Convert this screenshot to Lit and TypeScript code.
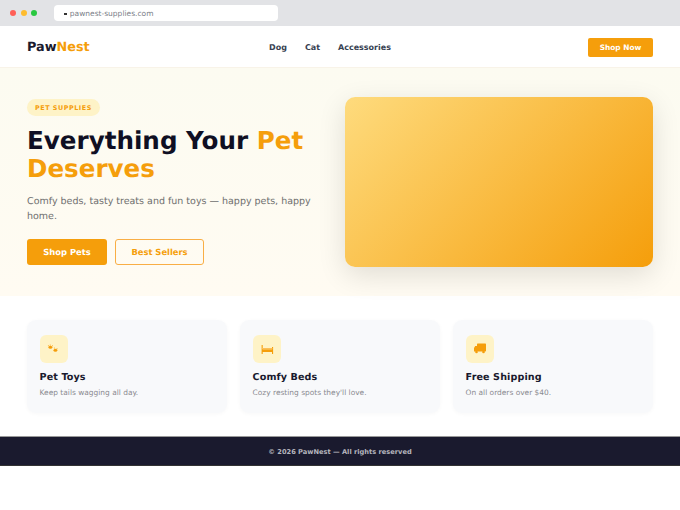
import { LitElement, html, css } from "lit";
import { customElement } from "lit/decorators.js";

@customElement("app-root")
export class AppRoot extends LitElement {
  static styles = css`
    :host { display: block; width: 680px; height: 510px; background: #fff; font-family: "DejaVu Sans", sans-serif; color: #1a1a2e; overflow: hidden; text-rendering: geometricPrecision; }
    * { box-sizing: border-box; }
    .chrome { height: 26px; background: #e2e3e6; display: flex; align-items: center; padding: 0 10px; gap: 4.6px; }
    .dot { width: 6px; height: 6px; border-radius: 50%; }
    .url { margin-left: 12px; width: 224px; height: 16px; background: #fff; border-radius: 4px; display: flex; align-items: center; padding-left: 10px; gap: 3px; font-size: 7.5px; color: #7b8088; }
    .lock { width: 3px; height: 2.5px; margin-top: 2px; background: #333; }
    nav { height: 42px; padding: 1px 27px 0; display: grid; grid-template-columns: 242px auto 1fr; align-items: center; border-bottom: 1px solid #f8f3e8; }
    .logo { font-size: 12.8px; font-weight: 700; }
    .logo span, h1 span { color: #f59e0b; }
    .links { display: flex; gap: 18px; font-size: 8px; font-weight: 600; color: #374151; }
    .cta { justify-self: end; background: #f59e0b; color: #fff; border-radius: 2px; font-size: 7.4px; font-weight: 700; width: 65px; height: 19px; display: flex; align-items: center; justify-content: center; }
    .hero { height: 228px; background: linear-gradient(180deg, #fcfbf1, #fffbf2); padding: 29px 27px 0; display: grid; grid-template-columns: 1fr 308px; column-gap: 11px; }
    .copy { padding-top: 2px; }
    .badge { display: flex; width: fit-content; height: 17px; align-items: center; padding: 0 8px; border-radius: 9px; background: #fef3c7; color: #f59e0b; font-size: 6.4px; font-weight: 700; letter-spacing: .55px; }
    h1 { margin: 11px 0 0; font-size: 24.6px; line-height: 28px; font-weight: 700; color: #0f0f23; }
    p { margin: 11px 0 0; font-size: 9.5px; line-height: 15px; color: #6f6f6f; }
    .actions { display: flex; gap: 8px; margin-top: 15px; }
    .btn { height: 26px; border-radius: 3px; font-size: 8.4px; font-weight: 700; display: flex; align-items: center; justify-content: center; }
    .primary { width: 80px; background: #f59e0b; color: #fff; }
    .secondary { width: 89px; border: 1px solid #f9ae45; color: #f59e0b; }
    .art { height: 170px; border-radius: 10px; background: linear-gradient(135deg, #fedb7d, #f59e0b); box-shadow: 0 8px 28px rgba(0,0,0,.12); }
    .cards { display: grid; grid-template-columns: repeat(3, 1fr); gap: 13px; padding: 24px 27px; }
    .card { height: 93px; background: #f8f9fb; border-radius: 9px; padding: 15px 12.6px; box-shadow: 0 1px 4px rgba(0,0,0,.03); }
    .ico { width: 28px; height: 28px; border-radius: 6px; background: #fef3c7; display: flex; align-items: center; justify-content: center; }
    h3 { margin: 8px 0 0; font-size: 9.6px; line-height: 14px; font-weight: 700; color: #1a1a2e; letter-spacing: .1px; }
    .card p { margin: 1.5px 0 0; font-size: 7.45px; line-height: 11px; color: #8a8a90; }
    footer { height: 28px; padding-top: 1px; background: #1a1a2e; display: flex; align-items: center; justify-content: center; color: #b5b5bd; font-size: 6.66px; font-weight: 600; box-shadow: 0 -1px 0 #999, 0 1px 0 #333; }
    svg { display: block; }
  `;
  render() {
    return html`
      <div class="chrome">
        <span class="dot" style="background:#ff5f57"></span>
        <span class="dot" style="background:#febc2e"></span>
        <span class="dot" style="background:#28c840"></span>
        <div class="url"><span class="lock"></span>pawnest-supplies.com</div>
      </div>
      <nav>
        <div class="logo">Paw<span>Nest</span></div>
        <div class="links"><span>Dog</span><span>Cat</span><span>Accessories</span></div>
        <div class="cta">Shop Now</div>
      </nav>
      <section class="hero">
        <div class="copy">
          <span class="badge">PET SUPPLIES</span>
          <h1>Everything Your <span>Pet</span> <span>Deserves</span></h1>
          <p>Comfy beds, tasty treats and fun toys — happy pets, happy home.</p>
          <div class="actions"><div class="btn primary">Shop Pets</div><div class="btn secondary">Best Sellers</div></div>
        </div>
        <div class="art"></div>
      </section>
      <section class="cards">
        <div class="card">
          <div class="ico"><svg width="14" height="14" viewBox="0 0 14 14" fill="#f59e0b"><ellipse cx="3.4" cy="5.2" rx="1.9" ry="1.5"/><ellipse cx="8.4" cy="8.2" rx="1.9" ry="1.5"/><circle cx="1.4" cy="3.8" r=".5"/><circle cx="3.2" cy="3" r=".5"/><circle cx="5.4" cy="3.8" r=".5"/><circle cx="7.4" cy="6" r=".5"/><circle cx="10" cy="6.8" r=".5"/></svg></div>
          <h3>Pet Toys</h3><p>Keep tails wagging all day.</p>
        </div>
        <div class="card">
          <div class="ico"><svg width="14" height="14" viewBox="0 0 14 14" fill="#f59e0b"><rect x="1.6" y="3" width="1.1" height="9"/><rect x="12" y="5" width="1.1" height="7"/><rect x="2" y="6" width="10.5" height="1.4" fill="#fbbf5a"/><rect x="2" y="7.4" width="10.5" height="2.6"/></svg></div>
          <h3>Comfy Beds</h3><p>Cozy resting spots they'll love.</p>
        </div>
        <div class="card">
          <div class="ico"><svg width="14" height="14" viewBox="0 0 14 14" fill="#f59e0b"><rect x="4" y="1.5" width="9" height="8" rx=".7"/><path d="M4 4H2.2L1 6v3.5h3z"/><circle cx="3.5" cy="10" r="1.3"/><circle cx="10.5" cy="10" r="1.3"/></svg></div>
          <h3>Free Shipping</h3><p>On all orders over $40.</p>
        </div>
      </section>
      <footer>© 2026 PawNest — All rights reserved</footer>
    `;
  }
}
